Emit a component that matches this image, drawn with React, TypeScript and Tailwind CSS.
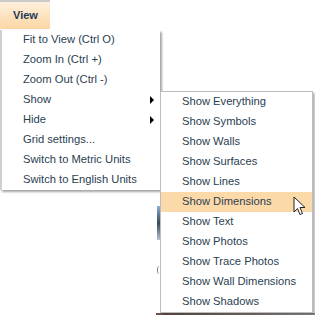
import React from "react";

const mainItems = [
  { label: "Fit to View (Ctrl O)" },
  { label: "Zoom In (Ctrl +)" },
  { label: "Zoom Out (Ctrl -)" },
  { label: "Show", sub: true },
  { label: "Hide", sub: true },
  { label: "Grid settings..." },
  { label: "Switch to Metric Units" },
  { label: "Switch to English Units" },
];

const subItems = [
  "Show Everything",
  "Show Symbols",
  "Show Walls",
  "Show Surfaces",
  "Show Lines",
  "Show Dimensions",
  "Show Text",
  "Show Photos",
  "Show Trace Photos",
  "Show Wall Dimensions",
  "Show Shadows",
];

function Cursor() {
  return (
    <svg width="14" height="21" viewBox="0 0 14 21" className="absolute left-[293px] top-[196px]">
      <path
        d="M1 1 L1 16 L4.5 12.5 L7 18.5 L9.5 17.5 L7 11.5 L12 11.5 Z"
        fill="#fff"
        stroke="#222"
        strokeWidth="1"
      />
    </svg>
  );
}

export default function App() {
  return (
    <div
      className="relative w-[315px] h-[315px] overflow-hidden bg-white text-[#2a4150]"
      style={{ fontFamily: '"Liberation Sans", Arial, sans-serif' }}
    >
      {/* top bar */}
      <div className="flex">
        <div className="w-[50px] h-[29px] border-t-2 border-[#c9c9c9] bg-gradient-to-b from-[#fef0dc] to-[#fbd6a4] flex items-center justify-center">
          <span className="text-[11px] font-bold text-[#1d3b58] pl-[1px]">View</span>
        </div>
      </div>

      {/* background fragments peeking behind the submenu */}
      <div className="absolute left-[157px] top-[206px] w-[3px] h-[34px] bg-gradient-to-b from-[#8fb0d8] via-[#3a4a5a] to-[#b8c4d0]" />
      <div className="absolute left-[157px] top-[266px] w-[3px] h-[8px] border-l border-[#8a8a8a] rounded-l-full" />
      <div className="absolute left-[156px] top-[313px] w-[159px] h-[2px] bg-gradient-to-r from-[#6b5548] to-[#9a9a9a]" />

      {/* main menu */}
      <div className="absolute left-0 top-[30px] w-[160px] flex flex-col bg-white border-l-2 border-[#cfcfcf] shadow-[2px_2px_2px_rgba(0,0,0,0.35)]">
        {mainItems.map((it) => (
          <div key={it.label} className="h-[20px] flex items-center justify-between pl-[21px] pr-[6px] text-[11.2px] leading-none">
            <span>{it.label}</span>
            {it.sub && (
              <svg width="4" height="8" viewBox="0 0 4 8">
                <path d="M0 0 L4 4 L0 8 Z" fill="#000" />
              </svg>
            )}
          </div>
        ))}
      </div>

      {/* sub menu */}
      <div className="absolute left-[160px] top-[91px] w-[153px] flex flex-col bg-white border border-[#bdbdbd] shadow-[2px_2px_2px_rgba(0,0,0,0.3)]">
        {subItems.map((s) => (
          <div
            key={s}
            className={
              "h-[20px] flex items-center pl-[21px] text-[11.2px] leading-none " +
              (s === "Show Dimensions" ? "bg-[#fcd9a8]" : "")
            }
          >
            {s}
          </div>
        ))}
      </div>

      <Cursor />
    </div>
  );
}
